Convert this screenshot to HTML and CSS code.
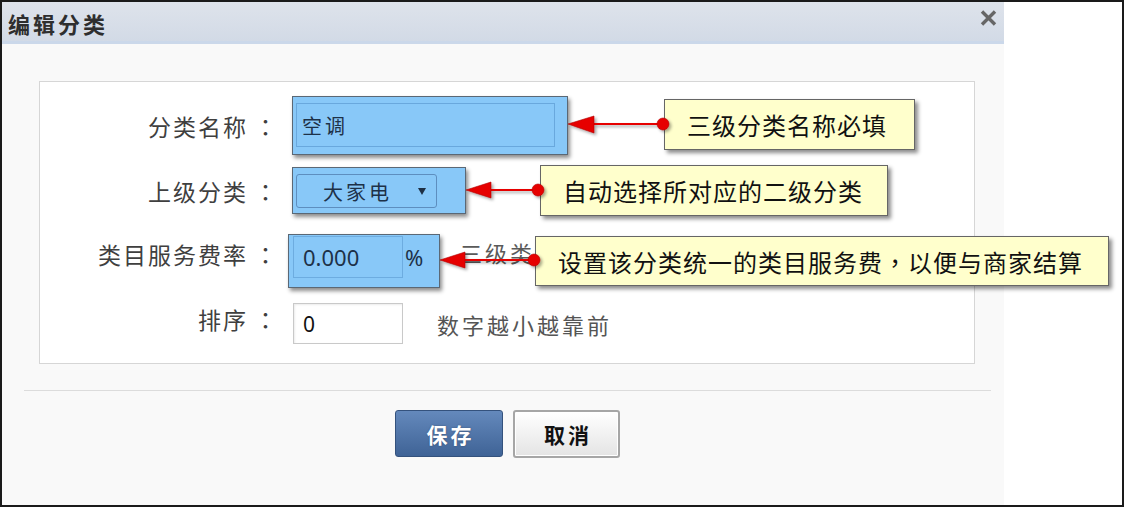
FILE: index.html
```html
<!DOCTYPE html>
<html lang="zh-CN">
<head>
<meta charset="utf-8">
<title>编辑分类</title>
<link rel="stylesheet" href="styles.css">
</head>
<body>
<div class="frame">
  <div class="dialog">
    <div class="dlg-head">
      <span class="dlg-title">编辑分类</span>
      <span class="dlg-close"><svg width="17" height="16" viewBox="0 0 17 16"><path d="M2 1.5 L15 14.5 M15 1.5 L2 14.5" stroke="#666" stroke-width="3.4" fill="none"/></svg></span>
    </div>
    <div class="form-box">
      <div class="row row-1">
        <label class="lbl">分类名称<span class="colon">：</span></label>
        <div class="hl hl-name"><div class="field field-name">空调</div></div>
      </div>
      <div class="row row-2">
        <label class="lbl">上级分类<span class="colon">：</span></label>
        <div class="hl hl-parent">
          <div class="field field-select"><span>大家电</span><svg class="caret" width="8" height="7" viewBox="0 0 8 7"><path d="M0 0 H8 L4 7 Z" fill="#1d2f44"/></svg></div>
        </div>
      </div>
      <div class="row row-3">
        <label class="lbl lbl-rate">类目服务费率<span class="colon">：</span></label>
        <div class="hl hl-rate"><div class="field field-rate">0.000</div><span class="pct">%</span></div>
        <span class="hint hint-rate">三级类</span>
      </div>
      <div class="row row-4">
        <label class="lbl lbl-sort">排序<span class="colon">：</span></label>
        <div class="field field-sort">0</div>
        <span class="hint hint-sort">数字越小越靠前</span>
      </div>
    </div>
    <div class="sep"></div>
    <div class="actions">
      <button class="btn btn-primary">保存</button>
      <button class="btn btn-default">取消</button>
    </div>
  </div>
  <div class="outside"></div>

  <div class="tip tip-1">三级分类名称必填</div>
  <div class="tip tip-2">自动选择所对应的二级分类</div>
  <div class="tip tip-3">设置该分类统一的类目服务费<span class="punct">，</span>以便与商家结算</div>

  <svg class="arrows" width="1124" height="507" viewBox="0 0 1124 507">
    <defs>
      <filter id="sh" x="-20%" y="-40%" width="160%" height="200%">
        <feDropShadow dx="2" dy="2" stdDeviation="1.5" flood-color="#000" flood-opacity="0.35"/>
      </filter>
    </defs>
    <g filter="url(#sh)">
      <line x1="592" y1="124" x2="663" y2="124" stroke="#e60000" stroke-width="2"/>
      <polygon points="568,124 594,116 594,133" fill="#e60000" stroke="#b00000" stroke-width="0.6"/>
      <circle cx="663" cy="124" r="6" fill="#e60000" stroke="#b00000" stroke-width="0.6"/>

      <line x1="489" y1="190" x2="538" y2="190" stroke="#e60000" stroke-width="2"/>
      <polygon points="466,190 491,182 491,198" fill="#e60000" stroke="#b00000" stroke-width="0.6"/>
      <circle cx="538" cy="190" r="6" fill="#e60000" stroke="#b00000" stroke-width="0.6"/>

      <line x1="463" y1="260" x2="534" y2="260" stroke="#e60000" stroke-width="2"/>
      <polygon points="440,260 465,252 465,268" fill="#e60000" stroke="#b00000" stroke-width="0.6"/>
      <circle cx="534" cy="260" r="6" fill="#e60000" stroke="#b00000" stroke-width="0.6"/>
    </g>
  </svg>
</div>
</body>
</html>
```

FILE: styles.css
```css
html, body {
  margin: 0;
  padding: 0;
  background: #fff;
}

body {
  font-family: "Noto Sans CJK SC", "Noto Sans", sans-serif;
}

.frame {
  position: relative;
  width: 1124px;
  height: 507px;
  box-sizing: border-box;
  border: 2px solid #1a1a1a;
  display: flex;
  overflow: hidden;
}

.dialog {
  width: 1002px;
  flex: none;
  background: #f9f9f9;
  display: flex;
  flex-direction: column;
}

.outside {
  flex: 1;
  background: #fff;
}

/* header */
.dlg-head {
  height: 39px;
  border-bottom: 3px solid #cbd8ea;
  background: linear-gradient(#dee3eb, #d2dae6);
  display: flex;
  align-items: center;
  padding: 0 7px 0 6px;
}

.dlg-title {
  font-size: 22px;
  font-weight: 700;
  letter-spacing: 3px;
  color: #2e2e2e;
  line-height: 1;
  margin-top: 3px;
}

.dlg-close {
  margin-left: auto;
  align-self: flex-start;
  margin-top: 8px;
  display: flex;
}

/* form box */
.form-box {
  margin: 37px 29px 0 37px;
  background: #fff;
  border: 1px solid #d6d6d6;
  padding: 14px 0 19px 0;
}

.row {
  display: flex;
  align-items: center;
}

.row-2 { margin-top: 12px; }
.row-3 { margin-top: 20px; }
.row-4 { margin-top: 15px; }

.lbl {
  width: 233px;
  flex: none;
  text-align: right;
  font-size: 23px;
  letter-spacing: 2px;
  line-height: 30px;
  color: #3f3f3f;
}

.lbl-rate {
  align-self: flex-start;
  margin-top: 5px;
}

.lbl-sort {
  align-self: flex-start;
  margin-top: 1px;
}

.colon {
  display: inline-block;
  padding-left: 6px;
  margin-right: -6px;
  font-family: "Noto Sans CJK TC", "Noto Sans CJK SC", sans-serif;
}

/* highlighted fields */
.hl {
  box-sizing: border-box;
  background: #88c8f8;
  border: 1px solid #5b6875;
  box-shadow: 2px 3px 4px rgba(0, 0, 0, 0.45);
  display: flex;
  align-items: center;
  flex: none;
}

.hl-name {
  width: 276px;
  height: 59px;
  margin-left: 19px;
  padding: 6px 12px 7px 3px;
}

.hl-parent {
  width: 174px;
  height: 47px;
  margin-left: 19px;
  padding: 6px 28px 5px 3px;
}

.hl-rate {
  width: 152px;
  height: 54px;
  margin-left: 15px;
  padding: 1px 0 9px 4px;
}

.field {
  box-sizing: border-box;
  display: flex;
  align-items: center;
  color: #1d3148;
  flex: none;
}

.field-name {
  width: 259px;
  height: 44px;
  border: 1px solid rgba(60, 120, 180, 0.4);
  padding-left: 5px;
  font-size: 20px;
  letter-spacing: 3px;
}

.field-select {
  width: 141px;
  height: 34px;
  border: 1px solid #5d8ebf;
  border-radius: 3px;
  padding-left: 26px;
  font-size: 20px;
  letter-spacing: 3px;
}

.caret {
  margin-left: auto;
  margin-right: 10px;
}

.field-rate {
  width: 110px;
  height: 42px;
  border: 1px solid rgba(60, 120, 180, 0.35);
  padding-left: 9px;
  font-size: 22px;
  font-family: "Noto Sans", "Noto Sans CJK SC", sans-serif;
}

.pct {
  margin-left: 2px;
  font-size: 22px;
  color: #1d3148;
  font-family: "Noto Sans", "Noto Sans CJK SC", sans-serif;
}

.field-sort {
  width: 110px;
  height: 41px;
  margin-left: 20px;
  background: #fff;
  border: 1px solid #c9c9c9;
  box-shadow: inset 1px 1px 2px rgba(0, 0, 0, 0.08);
  padding-left: 9px;
  font-size: 21px;
  color: #111;
  font-family: "Noto Sans", "Noto Sans CJK SC", sans-serif;
}

.hint {
  font-size: 22px;
  letter-spacing: 3px;
  color: #555;
  line-height: 30px;
}

.hint-rate {
  margin-left: 20px;
  margin-bottom: 18px;
  color: #5a5a5a;
}

.hint-sort {
  margin-left: 34px;
}

/* footer */
.sep {
  height: 1px;
  background: #dcdcdc;
  margin: 26px 13px 0 22px;
}

.actions {
  display: flex;
  align-items: flex-start;
  gap: 10px;
  padding-left: 393px;
  margin-top: 19px;
}

.btn {
  box-sizing: border-box;
  font-family: "Noto Sans CJK SC", sans-serif;
  font-size: 21px;
  font-weight: 700;
  letter-spacing: 3px;
  padding: 0 0 0 3px;
  border-radius: 3px;
  cursor: pointer;
}

.btn-primary {
  width: 108px;
  height: 47px;
  color: #fff;
  background: linear-gradient(#6489bc, #3f6396);
  border: 1px solid #34527d;
  text-shadow: 0 0 2px rgba(0, 0, 0, 0.3);
}

.btn-default {
  width: 107px;
  height: 48px;
  color: #111;
  background: linear-gradient(#ffffff, #e4e4e4);
  border: 2px solid #a6a6a6;
  box-shadow: inset 0 0 0 1px #fff;
}

/* annotations */
.tip {
  position: absolute;
  box-sizing: border-box;
  background: #ffffcc;
  border: 1px solid #666;
  box-shadow: 3px 3px 4px rgba(0, 0, 0, 0.45);
  display: flex;
  align-items: center;
  padding-left: 22px;
  font-size: 24px;
  letter-spacing: 1px;
  color: #111;
  white-space: nowrap;
}

.tip-1 { left: 662px; top: 97px; width: 251px; height: 51px; }
.tip-2 { left: 538px; top: 163px; width: 348px; height: 51px; }
.tip-3 { left: 533px; top: 234px; width: 574px; height: 50px; }

.punct {
  font-family: "Noto Sans CJK TC", "Noto Sans CJK SC", sans-serif;
}

.arrows {
  position: absolute;
  left: -2px;
  top: -2px;
  pointer-events: none;
}
```
